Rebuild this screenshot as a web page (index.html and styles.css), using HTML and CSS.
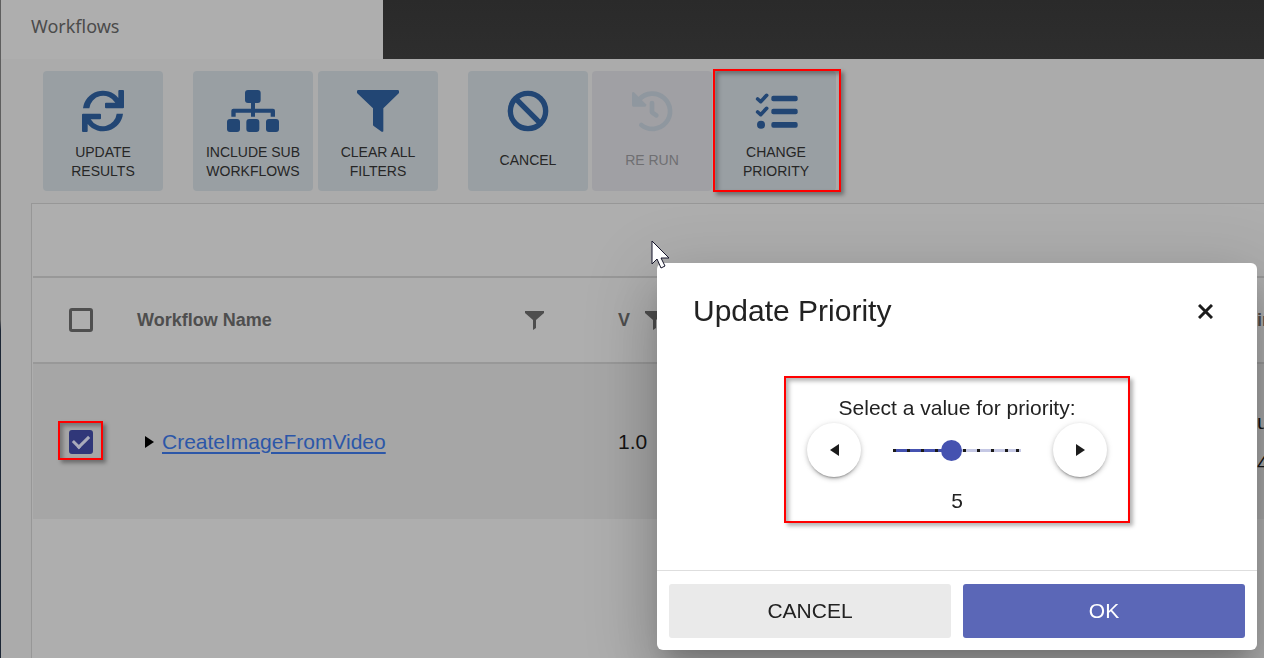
FILE: index.html
```html
<!DOCTYPE html>
<html lang="en">
<head>
<meta charset="utf-8">
<title>Workflows</title>
<link rel="stylesheet" href="styles.css">
</head>
<body>
<div class="page">
  <header class="topbar"><h1 class="tab">Workflows</h1></header>

  <nav class="toolbar" aria-label="Workflow actions">
    <div class="group">
      <button class="tile" type="button">
        <svg class="icon" width="42" height="42" viewBox="0 0 126 126"><path id="half" d="M3 55A60 60 0 0 1 109 24V3q0-3 3-3H123q3 0 3 3V52q0 3-3 3H72q-3 0-3-3V41q0-3 3-3H100A42 42 0 0 0 22 55Z"/><use href="#half" transform="rotate(180 63 63)"/></svg>
        <span class="label">UPDATE RESULTS</span>
      </button>
    </div>
    <div class="group">
      <button class="tile" type="button">
        <svg class="icon" width="52" height="42" viewBox="0 0 156 126"><rect x="54" width="47" height="39" rx="9"/><rect y="87" width="39" height="39" rx="9"/><rect x="58" y="87" width="39" height="39" rx="9"/><rect x="117" y="87" width="39" height="39" rx="9"/><path d="M72 36H84V56H138q6 0 6 6V80H131V68H84V80H72V68H26V80H13V62q0-6 6-6H72Z"/></svg>
        <span class="label">INCLUDE SUB WORKFLOWS</span>
      </button>
      <button class="tile" type="button">
        <svg class="icon" width="42" height="42" viewBox="0 0 126 126"><path d="M4 0H122q4 0 4 4v5L79 55V122q0 5-5 3L50 108q-2-2-2-4V55L0 9V4q0-4 4-4Z"/></svg>
        <span class="label">CLEAR ALL FILTERS</span>
      </button>
    </div>
    <div class="group group-tight">
      <button class="tile" type="button">
        <svg class="icon line" width="42" height="42" viewBox="-2 -2 126 126" stroke-width="16"><circle cx="61" cy="61" r="53"/><path d="M24 24L98 98"/></svg>
        <span class="label">CANCEL</span>
      </button>
      <button class="tile" type="button" disabled>
        <svg class="icon line" width="42" height="42" viewBox="-3 -2 126 126" stroke-width="14" stroke-linecap="round" stroke-linejoin="round"><path d="M22 26A53 53 0 1 1 28 103M60 37V65L73 74"/><path class="solid" d="M0 8Q1 2 6 5L42 41Q45 47 39 48H4Q0 48 0 44Z"/></svg>
        <span class="label">RE RUN</span>
      </button>
      <button class="tile" type="button">
        <svg class="icon" width="42" height="42" viewBox="-2 -10 126 126"><rect x="47" y="7" width="79" height="17" rx="6"/><rect x="47" y="46" width="79" height="17" rx="6"/><rect x="47" y="86" width="79" height="17" rx="6"/><circle cx="16" cy="94" r="12"/><path class="tick" d="M6 17L15 25L33 6M6 56L15 64L33 45"/></svg>
        <span class="label">CHANGE PRIORITY</span>
        <span class="mark mark-tile"></span>
      </button>
    </div>
  </nav>

  <main class="panel">
    <div class="panel-bar"></div>
    <table class="grid">
      <colgroup><col class="col-check"><col class="col-name"><col class="col-version"><col></colgroup>
      <thead>
        <tr>
          <th><span class="check-wrap"><input class="check" type="checkbox" aria-label="Select all workflows"></span></th>
          <th><span class="head head-name">Workflow Name
            <svg class="funnel" width="19" height="19" viewBox="0 0 19 19"><path d="M0 0H19V2L11 9V17L8 19V9L0 2Z"/></svg></span></th>
          <th><span class="head">V
            <svg class="funnel" width="19" height="19" viewBox="0 0 19 19"><path d="M0 0H19V2L11 9V17L8 19V9L0 2Z"/></svg></span></th>
          <th>in</th>
        </tr>
      </thead>
      <tbody>
        <tr>
          <td><span class="check-wrap"><input class="check" type="checkbox" checked aria-label="Select CreateImageFromVideo"><span class="mark mark-check"></span></span></td>
          <td><span class="name"><svg width="10" height="12" viewBox="0 0 10 12"><path d="M0 0L9 6L0 12Z"/></svg><a class="link" href="#">CreateImageFromVideo</a></span></td>
          <td>1.0</td>
          <td class="stacked">u<br>4</td>
        </tr>
      </tbody>
    </table>
  </main>
</div>

<section class="dialog" role="dialog" aria-labelledby="dialog-title">
  <div class="dialog-head">
    <h2 class="dialog-title" id="dialog-title">Update Priority</h2>
    <button class="close" type="button" aria-label="Close"><svg width="15" height="15" viewBox="0 0 15 15"><path d="M1 1L14 14M14 1L1 14"/></svg></button>
  </div>
  <div class="picker">
    <label class="picker-label" for="priority">Select a value for priority:</label>
    <div class="picker-row">
      <button class="round" type="button" aria-label="Decrease"><svg width="9" height="12" viewBox="0 0 9 12"><path d="M9 0V12L0 6Z"/></svg></button>
      <input class="slider" id="priority" type="range" min="1" max="10" value="5">
      <button class="round" type="button" aria-label="Increase"><svg width="9" height="12" viewBox="0 0 9 12"><path d="M0 0L9 6L0 12Z"/></svg></button>
    </div>
    <output class="value" for="priority">5</output>
  </div>
  <div class="dialog-foot">
    <button class="btn" type="button">CANCEL</button>
    <button class="btn btn-primary" type="button">OK</button>
  </div>
</section>

<svg class="cursor" width="19" height="29" viewBox="0 0 19 29"><path d="M1 1V24L6 19L10 28L14 26L10 18H18Z"/></svg>
</body>
</html>
```

FILE: styles.css
```css
* { box-sizing: border-box; }

body {
  margin: 0;
  overflow: hidden;
  background: #ababab;
  color: #141414;
  font: 21px "Liberation Sans", Arial, sans-serif;
}

button { font: inherit; color: inherit; border: 0; padding: 0; cursor: pointer; }

.page {
  display: flex;
  flex-direction: column;
  min-height: 100vh;
  padding-left: 1px;
  background: linear-gradient(#5e5e5e 320px, #1c2635 330px) left / 1px 100% no-repeat;
}

.topbar { display: flex; background: linear-gradient(#2a2a2a, #2e2e2e); }
.tab {
  width: 382px;
  margin: 0;
  padding: 14px 30px 20px;
  background: #aeaeae;
  color: #4b4b4b;
  font: 400 18px/25px "Noto Sans", sans-serif;
}

.toolbar { display: flex; gap: 30px; padding: 12px 42px; }
.group { display: flex; gap: 5px; }
.group-tight { gap: 4px; }
.tile {
  position: relative;
  display: flex;
  flex: none;
  flex-direction: column;
  align-items: center;
  gap: 11px;
  width: 120px;
  height: 120px;
  padding: 19px 12px 0;
  border-radius: 4px;
  background: #999fa3;
  color: #262626;
}
.tile:disabled { background: #a0a0a4; color: #6f6f72; }
.icon { flex: none; fill: #224674; overflow: visible; }
.line { fill: none; stroke: #224674; }
.tile:disabled .icon { stroke: #8f979f; }
.tile:disabled .solid { fill: #8f979f; stroke: none; }
.tick { fill: none; stroke: #224674; stroke-width: 11; stroke-linecap: round; stroke-linejoin: round; }
.label { display: flex; align-items: center; min-height: 34px; font-size: 14px; line-height: 19px; }

/* Red call-out frames */
.mark {
  position: absolute;
  border: 2px solid #f00;
  box-shadow: 3px 3px 4px rgba(0, 0, 0, .35), inset 3px 3px 4px rgba(0, 0, 0, .3);
  pointer-events: none;
}
.mark-tile { inset: -2px -5px -1px -3px; }
.mark-check { inset: -9px -10px -6px -11px; }

.panel {
  flex: 1;
  margin-left: 30px;
  padding-left: 1px;
  border: solid #979797;
  border-width: 1px 0 0 1px;
  background: #aeaeae;
  overflow: hidden;
}
.panel-bar { height: 72px; }
.grid { width: 1320px; border-collapse: collapse; table-layout: fixed; }
.col-check { width: 104px; }
.col-name { width: 481px; }
.col-version { width: 639px; }
.grid th, .grid td { padding: 0; text-align: left; }
.grid th {
  height: 86px;
  border: solid #989898;
  border-width: 2px 0;
  color: #4e4e4e;
  font-size: 18px;
}
.grid td { height: 156px; background: #a6a6a6; }
.stacked { line-height: 41px; }
.head { display: flex; align-items: center; gap: 15px; }
.head-name { justify-content: space-between; width: 407px; }
.funnel { fill: #4e4e4e; }
.name { display: flex; align-items: center; gap: 7px; padding-left: 8px; }
.link { color: #2c57a8; text-underline-offset: 3px; text-decoration-thickness: 2px; }

.check-wrap { position: relative; display: block; width: 24px; height: 24px; margin-left: 36px; }
.check {
  appearance: none;
  display: grid;
  place-items: center;
  width: 24px;
  height: 24px;
  margin: 0;
  border: 3px solid #4f4f4f;
  border-radius: 3px;
}
.check:checked { border-color: #303779; background: #303779; }
.check:checked::after {
  content: "";
  width: 13px;
  height: 7px;
  margin-bottom: 3px;
  border: solid #a9abbb;
  border-width: 0 0 3px 3px;
  rotate: -45deg;
}

.dialog {
  position: fixed;
  top: 263px;
  right: 7px;
  width: 600px;
  border-radius: 6px;
  background: #fff;
  color: #222;
  box-shadow: 0 16px 22px -10px rgba(0, 0, 0, .2), 0 36px 57px 4px rgba(0, 0, 0, .14), 0 14px 69px 12px rgba(0, 0, 0, .12);
}
.dialog-head { display: flex; justify-content: space-between; align-items: center; padding: 28px 36px 0; }
.dialog-title { margin: 0; font-size: 30px; font-weight: 400; line-height: 40px; }
.close { display: grid; place-items: center; width: 31px; height: 31px; background: none; }
.close path { fill: none; stroke: #1c1c1c; stroke-width: 3; }

.picker {
  display: flex;
  flex-direction: column;
  align-items: center;
  width: 346px;
  margin: 45px auto 47px;
  padding: 15px 21px 5px;
  border: 2px solid #f00;
  box-shadow: 3px 3px 4px rgba(0, 0, 0, .3), inset 3px 3px 4px rgba(0, 0, 0, .3);
}
.picker-label, .value { line-height: 30px; }
.value { margin-top: 9px; }
.picker-row { display: flex; align-items: center; gap: 32px; width: 100%; }
.round {
  display: grid;
  flex: none;
  place-items: center;
  width: 54px;
  height: 54px;
  border-radius: 50%;
  background: #fff;
  box-shadow: 0 3px 2px -2px rgba(0, 0, 0, .3), 0 2px 4px rgba(0, 0, 0, .18), 0 1px 7px rgba(0, 0, 0, .1);
}
.round svg { fill: #1c1c1c; }

.slider { appearance: none; flex: 1; min-width: 0; height: 21px; margin: 0; background: none; }
.slider::-webkit-slider-runnable-track {
  height: 3px;
  background:
    linear-gradient(#1a1a1a, #1a1a1a) right 2px top / 3px 3px no-repeat,
    repeating-linear-gradient(to right, #1a1a1a 0 3px, transparent 3px 14px) left / 120px 3px no-repeat,
    linear-gradient(to right, #4552b0 45%, #c5c8e4 45%);
}
.slider::-webkit-slider-thumb {
  appearance: none;
  width: 21px;
  height: 21px;
  margin-top: -9px;
  border-radius: 50%;
  background: #4552b0;
}

.dialog-foot {
  display: grid;
  grid-template-columns: 1fr 1fr;
  gap: 12px;
  padding: 13px 12px 12px;
  border-top: 1px solid #dedede;
}
.btn { height: 54px; border-radius: 3px; background: #eaeaea; }
.btn-primary { background: #5b67b7; color: #fff; }

.cursor { position: fixed; top: 240px; left: 651px; fill: #fff; stroke: #15152a; stroke-width: 1; }
```
